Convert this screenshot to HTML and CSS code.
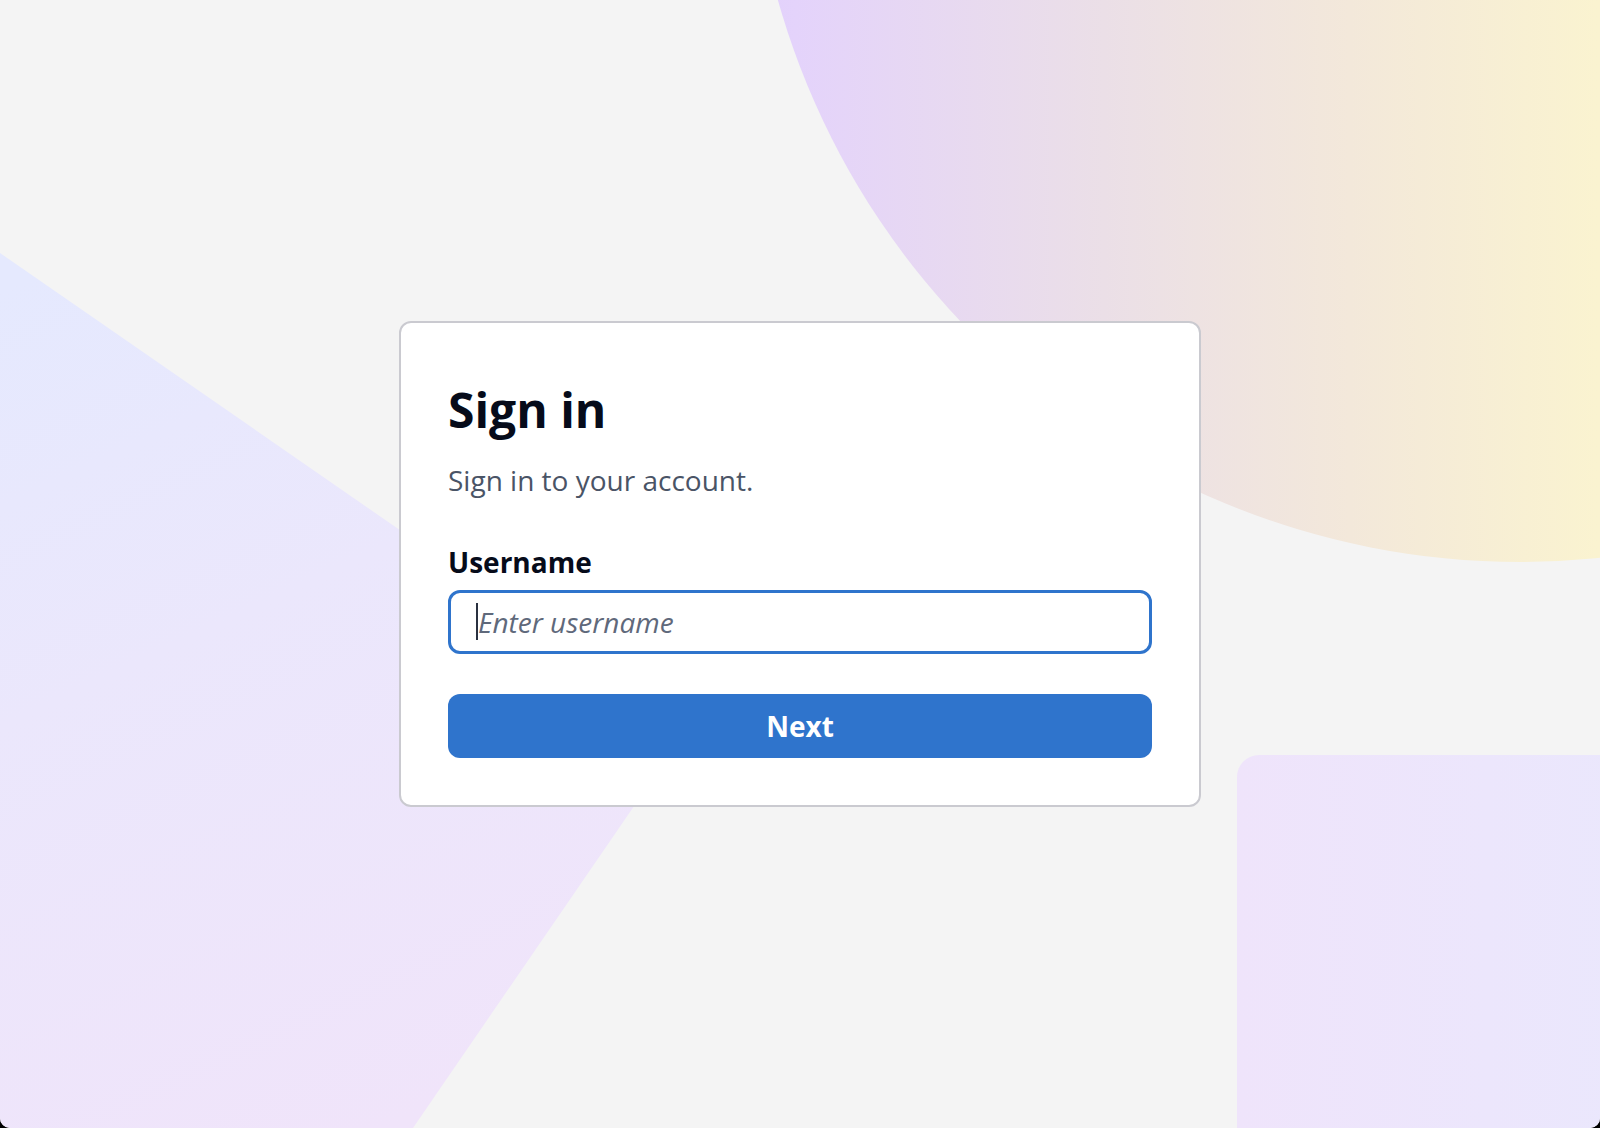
FILE: index.html
```html
<!DOCTYPE html>
<html lang="en">
<head>
<meta charset="utf-8">
<title>Sign in</title>
<link rel="stylesheet" href="styles.css">
</head>
<body>
<div class="screen">
  <div class="deco deco-circle"></div>
  <div class="deco deco-wedge"></div>
  <div class="deco deco-panel"></div>
  <main class="card">
    <h1 class="card-title">Sign in</h1>
    <p class="card-subtitle">Sign in to your account.</p>
    <form class="form">
      <label class="field-label" for="username">Username</label>
      <span class="field-wrap">
        <input class="field-input" id="username" type="text" placeholder="Enter username" autofocus>
      </span>
      <button class="btn-primary" type="button">Next</button>
    </form>
  </main>
</div>
</body>
</html>
```
FILE: styles.css
```css
html, body {
  margin: 0;
  padding: 0;
  background: #000;
}

.screen {
  position: relative;
  width: 100%;
  height: 1128px;
  overflow: hidden;
  background: #f4f4f4;
  border-radius: 0 0 10px 10px;
  display: flex;
  align-items: center;
  justify-content: center;
  font-family: "Open Sans", "Noto Sans", sans-serif;
}

.deco {
  position: absolute;
  pointer-events: none;
}

.deco-circle {
  left: 749px;
  top: -980px;
  width: 1542px;
  height: 1542px;
  border-radius: 50%;
  background: linear-gradient(to right,
    #e2d1fb 0%,
    #e4d3fb 3%,
    #ebdfe7 23%,
    #f3e8da 39%,
    #faf3d0 55%,
    #fdf8c8 100%);
}

.deco-wedge {
  left: 0;
  top: 0;
  width: 700px;
  height: 1128px;
  clip-path: polygon(0 253px, 687px 729px, 413px 1128px, 0 1128px);
  background: linear-gradient(155deg, #e5e9fe 20%, #ebe7fc 50%, #f0e4fa 90%);
}

.deco-panel {
  left: 1237px;
  top: 755px;
  width: 500px;
  height: 500px;
  border-radius: 22px;
  background: linear-gradient(to right, #efe4fb, #e9e8fd);
}

.card {
  position: relative;
  z-index: 1;
  width: 704px;
  padding: 47px 47px 47px 47px;
  margin-top: -1px;
  background: #ffffff;
  border: 2px solid #cacad0;
  border-radius: 12px;
}

.card-title {
  margin: 11px 0 0;
  font-size: 48px;
  line-height: 58px;
  font-weight: 700;
  color: #060b1a;
}

.card-subtitle {
  margin: 21px 0 0;
  font-size: 28px;
  line-height: 40px;
  font-weight: 400;
  color: #4a5466;
}

.form {
  display: flex;
  flex-direction: column;
  margin-top: 42px;
}

.field-label {
  font-size: 28px;
  line-height: 40px;
  font-weight: 700;
  color: #060b1a;
}

.field-wrap {
  position: relative;
  display: block;
  margin-top: 8px;
}

.field-wrap::before {
  content: "";
  position: absolute;
  left: 28px;
  top: 13px;
  width: 2px;
  height: 37px;
  background: #2a3140;
}

.field-input {
  display: block;
  box-sizing: border-box;
  width: 100%;
  height: 64px;
  padding: 0 24px 0 27px;
  border: 3px solid #2f74cc;
  border-radius: 12px;
  background: #fff;
  font-family: "Open Sans", "Noto Sans", sans-serif;
  font-size: 28px;
  color: #060b1a;
  outline: none;
  caret-color: transparent;
}

.field-input::placeholder {
  font-style: italic;
  color: #5f697b;
  opacity: 1;
}

.btn-primary {
  margin-top: 40px;
  width: 100%;
  height: 64px;
  border: none;
  border-radius: 12px;
  background: #2f74cc;
  color: #ffffff;
  font-family: "Open Sans", "Noto Sans", sans-serif;
  font-size: 28px;
  font-weight: 700;
  cursor: pointer;
}
```
